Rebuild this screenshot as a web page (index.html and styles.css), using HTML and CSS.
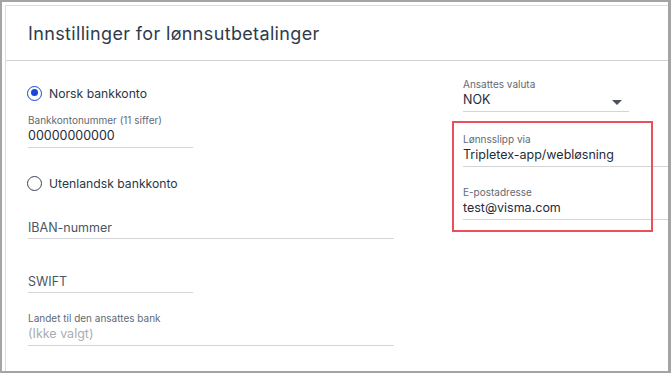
FILE: index.html
```html
<!DOCTYPE html>
<html>
<head>
<meta charset="utf-8">
<link rel="stylesheet" href="styles.css">
</head>
<body>
<div class="frame">
  <div class="card">
    <div class="header"><h1 class="title">Innstillinger for lønnsutbetalinger</h1></div>
    <div class="body">
      <div class="col-left">
        <label class="radio"><span class="dot checked"></span><span class="radio-text">Norsk bankkonto</span></label>
        <div class="field short first">
          <div class="lbl">Bankkontonummer (11 siffer)</div>
          <div class="val">00000000000</div>
        </div>
        <label class="radio second"><span class="dot"></span><span class="radio-text">Utenlandsk bankkonto</span></label>
        <div class="field long plain">
          <div class="ph">IBAN-nummer</div>
        </div>
        <div class="field short plain swift">
          <div class="ph">SWIFT</div>
        </div>
        <div class="field long country">
          <div class="lbl">Landet til den ansattes bank</div>
          <div class="val muted">(Ikke valgt)</div>
        </div>
      </div>
      <div class="col-right">
        <div class="field select">
          <div class="lbl">Ansattes valuta</div>
          <div class="val">NOK</div>
          <span class="caret"></span>
        </div>
        <div class="highlight-group">
          <div class="field wide">
            <div class="lbl">Lønnsslipp via</div>
            <div class="val">Tripletex-app/webløsning</div>
          </div>
          <div class="field wide">
            <div class="lbl">E-postadresse</div>
            <div class="val">test@visma.com</div>
          </div>
          <div class="highlight"></div>
        </div>
      </div>
    </div>
  </div>
</div>
</body>
</html>
```
FILE: styles.css
```css
* { box-sizing: border-box; }
html, body { margin: 0; padding: 0; background: #fff; }
body { font-family: "Inter", "Noto Sans", sans-serif; color: #1f2c3b; }

.frame {
  width: 671px;
  height: 373px;
  border-style: solid;
  border-color: #a4a4a4;
  border-width: 2px 3px 2px 2px;
  padding: 3px 0 0 3px;
  overflow: hidden;
  background: #fff;
}
.card {
  height: 100%;
  border-top: 1px solid #dadde2;
  border-left: 1px solid #dadde2;
  overflow: hidden;
}
.header {
  height: 55px;
  border-bottom: 1px solid #cfd2d6;
  display: flex;
  align-items: center;
  padding-left: 22px;
}
.title {
  margin: 0;
  font-size: 18px;
  font-weight: 400;
  color: #2f3b4c;
  letter-spacing: 0.35px;
}
.body {
  display: flex;
  padding-left: 22px;
}
.col-left { width: 366px; padding-top: 23px; }
.col-right { margin-left: 69px; padding-top: 16px; flex: 1; }

.radio { display: flex; align-items: center; height: 18px; gap: 7px; margin-left: -1px; }
.radio.second { margin-top: 26px; }
.dot {
  width: 15px; height: 15px; border-radius: 50%;
  border: 1.5px solid #3a4556;
  position: relative;
  flex: none;
}
.dot.checked { border-color: #1a45d9; }
.dot.checked::after {
  content: ""; position: absolute; left: 2.5px; top: 2.5px;
  width: 7px; height: 7px; border-radius: 50%; background: #1a45d9;
}
.radio-text { font-size: 12.2px; color: #2a3646; }

.field { border-bottom: 1px solid #d3d5d8; position: relative; }
.field.short { width: 165px; }
.field.long { width: 366px; }
.lbl { font-size: 10px; color: #626a75; line-height: 14px; }
.val { font-size: 12.5px; color: #1f2c3b; line-height: 18px; padding-bottom: 2px; }
.val.muted { color: #a9adb3; }
.ph { font-size: 12.5px; color: #4c5563; line-height: 18px; padding-bottom: 1px; }

.field.first { margin-top: 11px; }
.plain { margin-top: 27px; }
.swift { margin-top: 34px; }
.country { margin-top: 18px; }

.field.select { width: 166px; }
.caret {
  position: absolute; right: 7px; top: 23px;
  width: 0; height: 0;
  border-left: 5px solid transparent;
  border-right: 5px solid transparent;
  border-top: 5px solid #4a515c;
}
.highlight-group { position: relative; margin-top: 20px; }
.highlight-group .field { margin-bottom: 18px; }
.field.wide { width: 240px; }
.highlight {
  position: absolute;
  left: -11px; top: -11px;
  width: 201px; height: 111px;
  border: 2px solid #e8505b;
}
```
